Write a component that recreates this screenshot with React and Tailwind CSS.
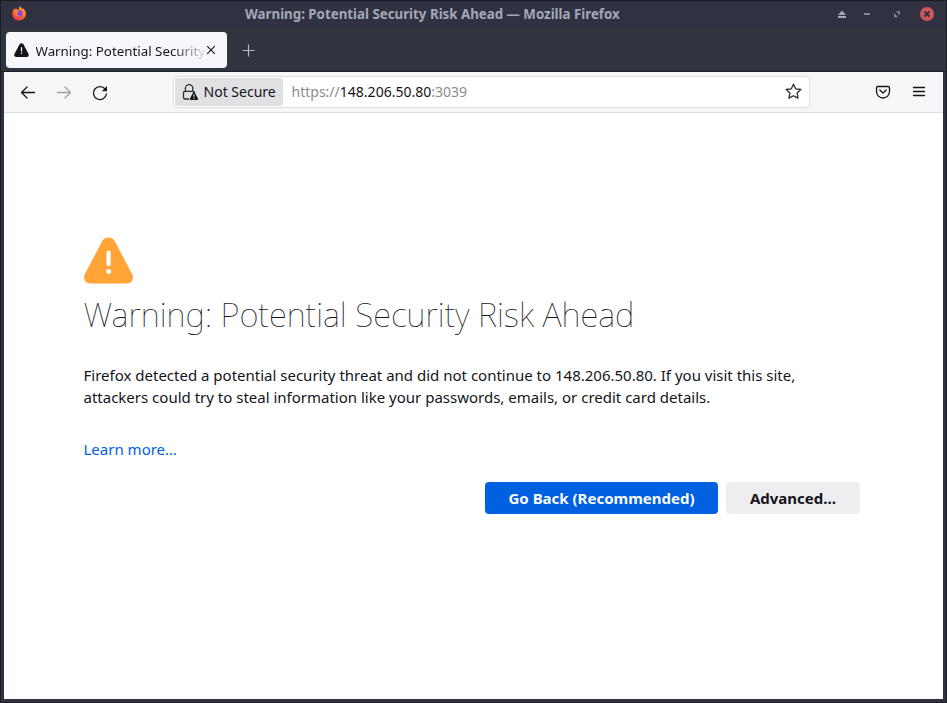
function WarningTriangle({ className, fill, mark }) {
  return (
    <svg className={className} viewBox="0 0 49 47" fill="none">
      <path d="M18.6 3.4C21.2-.5 27.8-.5 30.4 3.4L48.2 37.2C50.3 41.5 47.8 46.6 42.6 46.6H6.4C1.2 46.6-1.3 41.5.8 37.2Z" fill={fill} />
      <path d="M24.6 15.6V27.2" stroke={mark} strokeWidth="4.2" strokeLinecap="round" />
      <circle cx="24.6" cy="34.6" r="2.5" fill={mark} />
    </svg>
  );
}

function FirefoxLogo() {
  return (
    <svg className="mb-[2px] h-[15px] w-[15px]" viewBox="0 0 15 15">
      <defs>
        <linearGradient id="flame" x1="0.8" y1="0" x2="0.3" y2="1">
          <stop offset="0" stopColor="#ffa52c" />
          <stop offset="0.45" stopColor="#ff7a2a" />
          <stop offset="1" stopColor="#f0354b" />
        </linearGradient>
      </defs>
      <path d="M8.1 0C8.5 1.3 9.5 2 10.4 2.9L11.1 2.2C12.9 3.6 13.9 5.5 13.9 7.8C13.9 11.7 10.8 14.4 7.2 14.4C3.4 14.4.4 11.6.4 7.9C.4 5.8 1.2 4.2 2 2.2L3 3.4L4.2 2.2L5 3.6C6 3.4 6.5 3.4 7.1 3.4C6.8 2.2 7.3.8 8.1 0Z" fill="url(#flame)" />
      <circle cx="7.4" cy="7.4" r="3.1" fill="#8a42e6" />
      <path d="M2.4 5.6C3.9 4.7 5.7 4.9 7.1 6.2L5.1 7.1C4.7 8.6 5.7 9.7 7.1 9.8C4.9 11.3 2.3 9.3 2.4 5.6Z" fill="#ff8a2a" />
    </svg>
  );
}

function TitleBar() {
  return (
    <div className="flex h-[27px] items-center bg-[#303241]">
      <div className="w-[244px] pl-[11px]">
        <FirefoxLogo />
      </div>
      <div className="mb-px flex-1 whitespace-nowrap text-[13.3px] leading-[26px] font-bold text-[#a3a8b9]">
        Warning: Potential Security Risk Ahead — Mozilla Firefox
      </div>
      <svg className="mb-px h-[26px] w-[110px]" viewBox="836 1 110 26">
        <path d="M842 10.5L846 15H838ZM838 16H846V18H838Z" fill="#a3a8b9" />
        <path d="M864 13H870V15H864Z" fill="#858a9a" />
        <path d="M896 11.2H900V15.2ZM894 13V17.2H898Z" fill="#858a9a" />
        <circle cx="927" cy="14" r="7" fill="#cc575d" />
        <path d="M924.5 11.5L929.5 16.5M929.5 11.5L924.5 16.5" stroke="#2f3140" strokeWidth="1.8" />
      </svg>
    </div>
  );
}

function TabStrip() {
  return (
    <div className="flex h-11 items-start border-b border-[#1d2027] bg-[#2f343f] pt-1 pl-[5px]">
      <div className="flex h-9 w-[221px] items-center rounded-[4px] bg-[#f5f7fa] pl-2">
        <WarningTriangle className="h-[14px] w-[15px]" fill="#15141a" mark="#f5f7fa" />
        <div className="mt-[2px] ml-[6.5px] w-[168px] overflow-hidden whitespace-nowrap text-[13.33px] leading-5 text-[#15141a] [mask-image:linear-gradient(to_right,black_136px,transparent_172px)]">
          Warning: Potential Security Risk Ahead
        </div>
        <svg className="ml-[2.5px] h-[10px] w-[10px]" viewBox="0 0 10 10">
          <path d="M1.2 1.2L8.8 8.8M8.8 1.2L1.2 8.8" stroke="#15141a" strokeWidth="1.1" />
        </svg>
      </div>
      <svg className="mt-3 ml-[15px] h-[13px] w-[13px]" viewBox="0 0 13 13">
        <path d="M6.5 .5V12.5M.5 6.5H12.5" stroke="#b4bac4" strokeWidth="1.2" />
      </svg>
    </div>
  );
}

function NavButtons() {
  return (
    <svg className="h-10 w-[169px]" viewBox="4 72 169 40" fill="none" stroke="#15141a" strokeWidth="1.3" strokeLinecap="round" strokeLinejoin="round">
      <path d="M34.5 92.5H21.5M27 87L21.5 92.5L27 98" />
      <path d="M57.5 92.5H70.5M65 87L70.5 92.5L65 98" stroke="#a0a0a5" />
      <path d="M105.2 89.2A6.5 6.5 0 1 0 106.4 94" />
      <path d="M107 86V91.2H101.8Z" fill="#15141a" stroke="none" />
    </svg>
  );
}

function UrlBar() {
  return (
    <div className="flex h-8 w-[637px] items-center rounded-[4px] border border-[#dcdfe3] bg-white p-px">
      <div className="flex h-7 w-[108px] items-center rounded-[3px] bg-[#e0e1e3] pl-[7px]">
        <svg className="h-[17px] w-4" viewBox="182 84 16 17" fill="none">
          <path d="M189 99H185C184.2 99 183.5 98.5 183.5 97.6V92.8C183.5 91.8 184.1 91.4 185 91.4H193C193.8 91.4 194.4 91.7 194.4 92.6M185.4 91V88.5A3.7 3.9 0 0 1 192.8 88.5V91" stroke="#2b2a33" strokeWidth="1.3" />
          <path d="M193.3 92.2C193.6 91.6 194.4 91.6 194.7 92.2L198 98.8C198.2 99.4 197.9 100 197.3 100H190.4C189.8 100 189.5 99.4 189.8 98.8Z" fill="#15141a" />
          <path d="M194 94.2V96.8M194 97.8V98.9" stroke="#e0e1e3" strokeWidth="1.1" />
        </svg>
        <span className="ml-[5.5px] whitespace-nowrap text-[14.03px] text-[#15141a]">Not Secure</span>
      </div>
      <div className="ml-[8.5px] flex-1 whitespace-nowrap text-[14.03px] text-[#8b8b90]">
        https://<span className="text-[#15141a]">148.206.50.80</span>:3039
      </div>
      <svg className="mr-[6px] mb-px h-[17px] w-[17px]" viewBox="0 0 17 17" fill="none">
        <path d="M8.5 1.2L10.7 5.8L15.8 6.5L12.1 10L13 15.1L8.5 12.7L4 15.1L4.9 10L1.2 6.5L6.3 5.8Z" stroke="#2b2a33" strokeWidth="1.3" strokeLinejoin="round" />
      </svg>
    </div>
  );
}

function Toolbar() {
  return (
    <div className="flex h-[41px] items-center border-b border-[#d9dce0] bg-[#f5f6f7]">
      <NavButtons />
      <UrlBar />
      <svg className="ml-auto h-10 w-[80px]" viewBox="863 72 80 40" fill="none" stroke="#15141a" strokeWidth="1.3" strokeLinecap="round" strokeLinejoin="round">
        <path d="M877.8 86.5H888.2Q889.5 86.5 889.5 87.8V91.5A6.5 6.5 0 0 1 876.5 91.5V87.8Q876.5 86.5 877.8 86.5ZM879.8 90L883 93L886.2 90" />
        <path d="M913.5 87.5H924.5M913.5 91.5H924.5M913.5 95.5H924.5" />
      </svg>
    </div>
  );
}

function ErrorPage() {
  return (
    <main className="flex-1 bg-white pt-[124px] pl-[79.5px] text-[15px] text-[#15141a]">
      <WarningTriangle className="ml-[0.5px] h-[47px] w-[49px]" fill="#ffa436" mark="#ffffff" />
      <h1 className="mt-[11px] whitespace-nowrap text-[33px] leading-[40px] font-thin">
        Warning: Potential Security Risk Ahead
      </h1>
      <p className="mt-[29px] whitespace-nowrap leading-[22px]">
        Firefox detected a potential security threat and did not continue to 148.206.50.80. If you visit this site,
        <br />
        attackers could try to steal information like your passwords, emails, or credit card details.
      </p>
      <a className="mt-[30px] block leading-[22px] text-[#0061e0]">Learn more…</a>
      <div className="mt-[22px] flex w-[776.5px] justify-end gap-2 font-bold">
        <button className="h-8 w-[233px] rounded-[4px] bg-[#0061e0] text-[#fbfbfe]">Go Back (Recommended)</button>
        <button className="h-8 w-[134px] rounded-[4px] bg-[#eeeef0]">Advanced…</button>
      </div>
    </main>
  );
}

export default function App() {
  return (
    <div className="h-[703px] w-[947px] overflow-hidden border border-[#1b1d24] bg-[#303241] font-['Noto_Sans',sans-serif]">
      <TitleBar />
      <TabStrip />
      <div className="mx-[3px] flex h-[627px] w-[939px] flex-col">
        <Toolbar />
        <ErrorPage />
      </div>
    </div>
  );
}
